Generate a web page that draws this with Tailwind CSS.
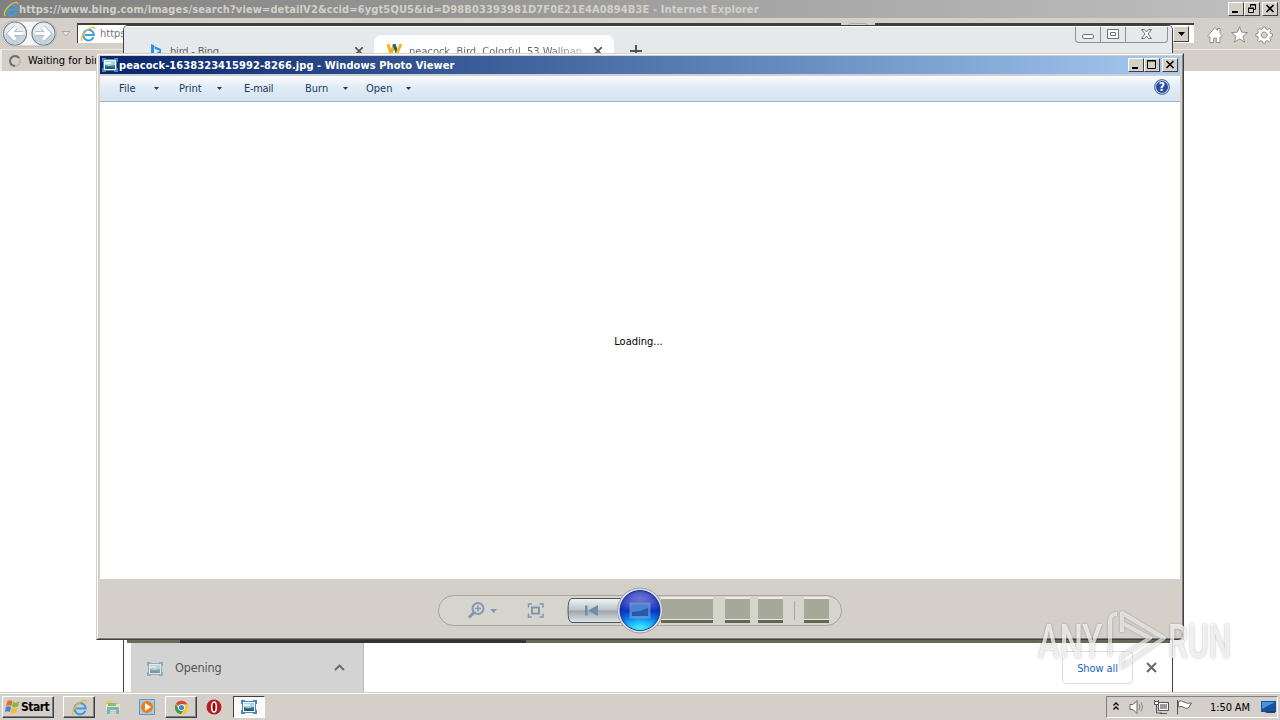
<!DOCTYPE html>
<html lang="en">
<head>
    <meta charset="UTF-8">
    <meta name="viewport" content="width=device-width, initial-scale=1.0">
    <title>Windows Photo Viewer</title>
    <script src="https://cdn.jsdelivr.net/npm/@tailwindcss/browser@4"></script>
</head>
<body class="bg-white">
    <svg class="hidden">
        <defs>
            <symbol id="ie" viewBox="0 0 16 16">
                <path d="M13.500 11.200A5.300 5.300 0 1 1 13.900 8.900H5" fill="none" stroke="#3a9fe0" stroke-width="2"/>
                <path d="M2.600 14.600C-.5 14.500 2.200 8 7 4.200 11 1 15.200.2 14.600 3.400" fill="none" stroke="#f0bd2a" stroke-width="1.300"/>
            </symbol>
            <symbol id="photo" viewBox="0 0 16 16">
                <path d="M0 1h4v1h8V1h4v4h-1v6h1v4h-4v-1H4v1H0v-4h1V5H0z" fill="#4d87b8"/>
                <path d="M2 3h12v10H2z" fill="#f4fafd"/>
                <path d="M3 4h10v8H3z" fill="#a9d5e8"/>
                <path d="M3 5h6v2H3z" fill="#e3f3f9"/>
                <path d="M3 8l4 1 6-1v4H3z" fill="#37788e"/>
                <path d="M3 10.500l5-.5 5 1v1H3z" fill="#245a62"/>
            </symbol>
        </defs>
    </svg>
    <div class="relative h-[720px] w-[1280px] overflow-hidden bg-white text-[11px] leading-none whitespace-nowrap text-black [font-family:'DejaVu_Sans_Condensed','DejaVu_Sans',sans-serif]">

        <!-- Internet Explorer -->
        <div class="flex h-[692px] flex-col">
            <header class="flex h-[18px] items-center bg-linear-to-r from-[#808080] to-[#c0c0c0] pl-[3px]">
                <svg class="size-4"><use href="#ie"/></svg>
                <h1 class="flex-1 text-[11px] font-bold tracking-[0.12px] text-[#d4d0c8]">https://www.bing.com/images/search?view=detailV2&amp;ccid=6ygt5QU5&amp;id=D98B03393981D7F0E21E4A0894B3E - Internet Explorer</h1>
                <div class="flex pr-[2px]">
                    <button class="flex h-[14px] w-4 border border-t-white border-r-[#404040] border-b-[#404040] border-l-white bg-[#d4d0c8]"><svg class="h-3 w-[14px]" viewBox="0 0 14 12"><path d="M3 8h6v2H3z"/></svg></button>
                    <button class="flex h-[14px] w-4 border border-t-white border-r-[#404040] border-b-[#404040] border-l-white bg-[#d4d0c8]"><svg class="h-3 w-[14px]" viewBox="0 0 14 12"><path d="M5.500 4V1.500h5v5H8M5 2h6M3.500 5.500h5v4h-5zM3 5h6" fill="none" stroke="#000"/></svg></button>
                    <button class="ml-[2px] flex h-[14px] w-4 border border-t-white border-r-[#404040] border-b-[#404040] border-l-white bg-[#d4d0c8]"><svg class="h-3 w-[14px]" viewBox="0 0 14 12"><path d="M3.500 2l7 7M10.500 2l-7 7" stroke="#000" stroke-width="1.600"/></svg></button>
                </div>
            </header>
            <div class="flex h-[31px] bg-[#d4cfc8]">
                <svg class="h-[31px] w-[77px]" viewBox="0 0 77 31">
                    <path d="M14 3h30a12 12 0 0 1 0 25H14a12 12 0 0 1 0-25" fill="#f6f6f5" stroke="#b5b5b5"/>
                    <g fill="#e6ecef" stroke="#727b82" stroke-width="1.200"><circle cx="15" cy="15.500" r="11.500"/><circle cx="43.500" cy="15.500" r="11.500"/></g>
                    <path d="M4.500 16q10.500 4 21 0a10.500 10.500 0 0 1-21 0M33 16q10.500 4 21 0a10.500 10.500 0 0 1-21 0" fill="#c3d3de"/>
                    <path d="M23 15.500H9.500M15.500 9.500l-6 6 6 6M35.500 15.500H49M43 9.500l6 6-6 6" fill="none" stroke="#a0abb3" stroke-width="5"/>
                    <path d="M23 15.500H9.500M15.500 9.500l-6 6 6 6M35.500 15.500H49M43 9.500l6 6-6 6" fill="none" stroke="#fff" stroke-width="3.600"/>
                    <path d="M62 13.500h8l-4 4.500z" fill="#e8e5df" stroke="#aaa7a2"/>
                </svg>
                <div class="mt-[5px] flex h-5 w-[764px] border-t-2 border-l border-[#404040] bg-white pl-[2px]">
                    <svg class="mt-px size-4"><use href="#ie"/></svg>
                    <span class="ml-1 pt-[3px] text-[#777]">https</span>
                </div>
                <div class="mx-[6px] mt-[5px] h-5 w-[22px] rounded-t border border-[#aaa]"></div>
                <div class="mt-[5px] flex h-5 w-[319px] border-t-2 border-l border-[#404040] bg-white">
                    <span class="mt-[1px] mr-[5px] ml-auto flex h-4 w-4 items-center justify-center border border-t-white border-r-[#404040] border-b-[#404040] border-l-white bg-[#d4d0c8]"><svg class="h-1 w-[7px]" viewBox="0 0 7 4"><path d="M0 0h7L3.500 4z"/></svg></span>
                </div>
                <svg class="mt-[7px] ml-[11px] h-5 w-[70px]" viewBox="0 0 70 20">
                    <g fill="#fff" stroke="#918e89" stroke-width="1">
                        <path d="M3 10.500l7-8 2.500 2.800V3.500H15v4.800l2.500 2.700-1.300 1H15v5.500h-3.700v-4.500H8.700v4.500H5V12H3.800l-1.300-1z"/>
                        <path d="M34.500 1.800l2.200 5.400 5.800.4-4.500 3.700 1.500 5.800-5-3.200-5 3.200 1.500-5.800-4.500-3.700 5.800-.4z"/>
                        <path fill-rule="evenodd" d="M58 2h2.500l.5 2 1.500.7 2-1.200 1.600 1.800-1.200 1.700.6 1.600 2 .4v2.300l-2 .5-.6 1.600 1.200 1.800-1.700 1.600-1.900-1.200-1.600.6-.5 2H58l-.6-2-1.500-.6-1.800 1.200-1.700-1.700 1.200-1.700-.7-1.700-2-.4V8.900l2-.4.7-1.600-1.200-1.700L54 3.500l1.900 1.200 1.500-.7zM59.200 7a3 3 0 1 0 .01 0"/>
                    </g>
                </svg>
            </div>
            <div class="flex h-[22px] items-center border-t border-l-2 border-[#eeeae4] bg-[#d4cfc8]">
                <svg class="mr-[6px] ml-1.5 h-[14px] w-[14px]" viewBox="0 0 14 14"><circle cx="7" cy="7" r="5" fill="none" stroke="#bbb8b4" stroke-width="2"/><path d="M7 12a5 5 0 1 1 4-8" fill="none" stroke="#6e6e6e" stroke-width="2"/></svg>
                <span>Waiting for bing.com</span>
            </div>
        </div>

        <!-- Chrome -->
        <div class="absolute top-[25px] left-[123px] flex h-[667px] w-[1050px] flex-col overflow-hidden rounded-t-[5px] border-x border-t border-[#404040] bg-white">
            <div class="flex h-[40px] border-t border-white bg-[#e6e9ec]">
                <div class="flex w-[250px] pt-[17px] pl-[26px] text-[#606469]">
                    <svg class="h-4 w-3" viewBox="0 0 12 16"><path d="M1 0l3 1v9l6-3-5-2-1-3 7 3v5l-7 5-3-2z" fill="#2595e5"/></svg>
                    <span class="ml-2 pt-0.5 tracking-[-0.2px]">bird - Bing</span>
                    <svg class="mt-[3px] mr-[11px] ml-auto size-2" viewBox="0 0 8 8"><path d="M0 0l8 8M8 0L0 8" stroke="#555" stroke-width="1.700"/></svg>
                </div>
                <div class="mt-2 flex w-[240px] rounded-t-lg bg-white pt-[9px] pl-[13px] text-[#606469]">
                    <svg class="h-3 w-4" viewBox="0 0 16 12"><path d="M1 0l3 10 3-9" fill="none" stroke="#eeb522" stroke-width="3"/><path d="M7 0l3 9" stroke="#31577b" stroke-width="3"/><path d="M10 9l4-9" stroke="#eeb522" stroke-width="3"/></svg>
                    <span class="ml-[6px] w-[174px] overflow-hidden bg-linear-to-r from-[#606469] from-80% to-[#c0c0c0] bg-clip-text pt-0.5 text-transparent">peacock, Bird, Colorful, 53 Wallpap</span>
                    <svg class="mt-[3px] ml-[11px] size-2" viewBox="0 0 8 8"><path d="M0 0l8 8M8 0L0 8" stroke="#555" stroke-width="1.700"/></svg>
                </div>
                <svg class="mt-[18px] ml-[16px] size-3" viewBox="0 0 12 12"><path d="M0 6h12M6 0v12" stroke="#505357" stroke-width="2"/></svg>
                <div class="mr-[4px] ml-auto flex h-[16px] w-[93px] rounded-b-[4px] border border-t-0 border-[#8d9298] text-[#606469]">
                    <span class="w-[25px] border-r border-[#8d9298]"><svg class="h-4 w-6" viewBox="0 0 24 16"><rect x="6.500" y="7.500" width="11" height="4" rx="1.500" fill="#fff" stroke="#6d7278"/></svg></span>
                    <span class="w-[25px] border-r border-[#8d9298]"><svg class="h-4 w-6" viewBox="0 0 24 16"><path d="M6.500 2.500h11v9h-11zM9.500 5.500h5v3h-5z" fill="#fff" stroke="#6d7278"/></svg></span>
                    <svg class="h-4 w-[40px]" viewBox="0 0 40 16"><path d="M15.500 2.500h3l2 2.500 2-2.500h3L22 7l3.500 4.500h-3l-2-2.500-2 2.500h-3L19 7z" fill="#fff" stroke="#6d7278"/></svg>
                </div>
            </div>
            <div class="mt-auto mr-[2px] ml-[3px] h-[13px] bg-linear-to-r from-[#6b6b58] from-[53px] via-[#343434] via-[53px] to-[#343434] to-[400px]"><div class="ml-[399px] h-full bg-[#69695a]"></div></div>
            <div class="ml-[7px] flex h-[49px] shrink-0">
                <div class="flex w-[233px] items-center border-r border-[#bbb] bg-[#d3d3d3] text-[12.500px] text-[#555]">
                    <svg class="mt-[2px] ml-4 size-4 opacity-50"><use href="#photo"/></svg>
                    <span class="mt-px ml-[12px] tracking-[-0.150px]">Opening</span>
                    <svg class="mr-[18px] ml-auto h-[7px] w-[11px]" viewBox="0 0 11 7"><path d="M1 6l4.500-4.500L10 6" fill="none" stroke="#666" stroke-width="1.800"/></svg>
                </div>
                <div class="mt-[8px] ml-auto flex h-[33px] w-[71px] items-center justify-center rounded border border-[#dadce0] pt-px tracking-[-0.100px] text-[#1967c0]">Show all</div>
                <svg class="mt-[19px] mr-[15px] ml-[13px] size-[11px]" viewBox="0 0 11 11"><path d="M1 1l9 9M10 1l-9 9" stroke="#666" stroke-width="2"/></svg>
            </div>
        </div>

        <!-- Photo Viewer -->
        <div class="absolute top-[53px] left-[96px] flex h-[587px] w-[1088px] flex-col border border-t-[#d4cfc8] border-r-[#404040] border-b-[#404040] border-l-[#d4cfc8] bg-[#d4cfc8]">
            <div class="flex flex-1 flex-col border border-t-white border-r-[#808080] border-b-[#808080] border-l-white px-[2px] pt-px">
                <header class="flex h-[18px] shrink-0 items-center bg-linear-to-r from-[#0a246a] to-[#a6caf0] pl-[2px] text-white">
                    <svg class="size-4"><use href="#photo"/></svg>
                    <h2 class="ml-px flex-1 text-[11px] font-bold tracking-[0.08px]">peacock-1638323415992-8266.jpg - Windows Photo Viewer</h2>
                    <div class="flex pr-[2px]">
                        <button class="flex h-[14px] w-4 border border-t-white border-r-[#404040] border-b-[#404040] border-l-white bg-[#d4d0c8]"><svg class="h-3 w-[14px]" viewBox="0 0 14 12"><path d="M3 8h6v2H3z"/></svg></button>
                        <button class="flex h-[14px] w-4 border border-t-white border-r-[#404040] border-b-[#404040] border-l-white bg-[#d4d0c8]"><svg class="h-3 w-[14px]" viewBox="0 0 14 12"><path d="M2.500 1.500h8v8h-8zM2 2h9" fill="none" stroke="#000"/></svg></button>
                        <button class="ml-[2px] flex h-[14px] w-4 border border-t-white border-r-[#404040] border-b-[#404040] border-l-white bg-[#d4d0c8]"><svg class="h-3 w-[14px]" viewBox="0 0 14 12"><path d="M3.500 2l7 7M10.500 2l-7 7" stroke="#000" stroke-width="1.600"/></svg></button>
                    </div>
                </header>
                <nav class="mt-px flex h-[27px] shrink-0 items-center border-t border-b border-t-[#c1d0e2] border-b-[#a0afc3] bg-linear-to-b from-[#fafcfe] via-[#e1ecf6] via-45% to-[#d5e4f1] pr-[10px] pl-[19px] text-[#1e395b]">
                    <span class="w-[35px]">File</span>
                    <svg class="h-[3px] w-[5px]" viewBox="0 0 5 3"><path d="M0 0h5L2.500 3z" fill="#1e395b"/></svg>
                    <span class="ml-5 w-[38px]">Print</span>
                    <svg class="h-[3px] w-[5px]" viewBox="0 0 5 3"><path d="M0 0h5L2.500 3z" fill="#1e395b"/></svg>
                    <span class="ml-[22px] w-[61px] tracking-[-0.300px]">E-mail</span>
                    <span class="w-[38px]">Burn</span>
                    <svg class="h-[3px] w-[5px]" viewBox="0 0 5 3"><path d="M0 0h5L2.500 3z" fill="#1e395b"/></svg>
                    <span class="ml-[18px] w-10">Open</span>
                    <svg class="h-[3px] w-[5px]" viewBox="0 0 5 3"><path d="M0 0h5L2.500 3z" fill="#1e395b"/></svg>
                    <span class="mb-[3px] ml-auto flex size-4 items-center justify-center rounded-full border border-[#657eaa] bg-[#264aa5] text-[12px] font-bold text-white ring-1 ring-[#c9d7e7] ring-inset">?</span>
                </nav>
                <main class="flex flex-1 items-center justify-center bg-white pt-[2px] pr-[3px]">Loading...</main>
                <footer class="flex h-[59px] shrink-0 justify-center">
                    <svg class="mt-[6px] h-[50px] w-[408px]" viewBox="0 0 408 50">
                        <defs>
                            <linearGradient id="ball" x2="0" y2="1"><stop stop-color="#a5aae4"/><stop offset=".3" stop-color="#5562cf"/><stop offset=".5" stop-color="#0a35c0"/><stop offset=".75" stop-color="#078bee"/><stop offset="1" stop-color="#45e6fa"/></linearGradient>
                            <radialGradient id="rim" cy=".6" r=".6"><stop offset=".6" stop-color="#0625ac" stop-opacity="0"/><stop offset="1" stop-color="#0a1fa0" stop-opacity=".7"/></radialGradient>
                            <radialGradient id="glow" cx=".5" cy="1" r=".45"><stop stop-color="#4ff0ff"/><stop offset="1" stop-color="#19b4ff" stop-opacity="0"/></radialGradient>
                            <linearGradient id="prev" x2="0" y2="1"><stop stop-color="#f0f3f4"/><stop offset=".48" stop-color="#bcc5c9"/><stop offset=".52" stop-color="#9ca7ad"/><stop offset="1" stop-color="#e1e6e7"/></linearGradient>
                        </defs>
                        <rect x="2.500" y="10.500" width="403" height="30" rx="15" fill="#d5d4cd" stroke="#a4a5a5"/>
                        <g fill="none" stroke="#8298b2" stroke-width="2"><circle cx="42" cy="23.500" r="5.500"/><path d="M38 27.500l-5 5" stroke-width="3"/><path d="M39 23.500h6M42 20.500v6" stroke-width="1.500"/><path d="M96 22.500h7v6h-7z"/><path d="M92.500 22.500v-3.500h3.500M103.500 19h3.500v3.500M107 28.500v3.500h-3.500M96 32h-3.500v-3.500" stroke-width="1.500"/></g>
                        <path d="M54 24h7l-3.500 4z" fill="#8298b2"/>
                        <path d="M190 13.500h-54q-4 0-4 12t4 12h54" fill="url(#prev)" stroke="#50575b"/>
                        <path d="M149 20.500h2.500v10H149zM152 25.500l10-5.500v11z" fill="#748da7"/>
                        <g fill="#a6a99a"><path d="M225 14h52v20h-52zM289 14h25v20h-25zM322 14h25v20h-25zM368 14h25v20h-25z"/></g>
                        <g fill="#626651"><path d="M225 35h52v3h-52zM289 35h25v3h-25zM322 35h25v3h-25zM368 35h25v3h-25z"/></g>
                        <g fill="#eceae3"><path d="M225 12h52v2h-52zM289 12h25v2h-25zM322 12h25v2h-25zM368 12h25v2h-25zM225 34h52v1h-52zM289 34h25v1h-25zM322 34h25v1h-25zM368 34h25v1h-25z"/></g>
                        <path d="M358.500 16v19" stroke="#a5a5a1"/>
                        <circle cx="204" cy="25.500" r="22.500" fill="#e1e1e2" stroke="#9a9ca7"/>
                        <circle cx="204" cy="25.500" r="20" fill="url(#ball)" stroke="#17388f"/>
                        <circle cx="204" cy="25.500" r="20" fill="url(#rim)"/>
                        <circle cx="204" cy="25.500" r="19.500" fill="url(#glow)"/>
                        <path d="M193.500 17.500h21v16h-21z" fill="#7fa0d4" opacity=".65"/>
                        <path d="M196 20h16v11h-16z" fill="#4a83cf"/><path d="M196 27l8-1 8-3v8h-16z" fill="#275aa8"/>
                    </svg>
                </footer>
            </div>
        </div>

        <!-- Taskbar -->
        <footer class="relative flex h-7 items-center border-t border-[#d4cfc8] bg-[#d4cfc8] pt-px pl-[2px] shadow-[inset_0_1px_#fff]">
            <button class="flex h-[22px] w-[52px] items-center border border-t-white border-r-[#404040] border-b-[#404040] border-l-white pl-[2px] text-[12px] font-bold shadow-[inset_-1px_-1px_#808080]">
                <svg class="h-4 w-[15px]" viewBox="0 0 15 16"><path d="M2.500 2q3-1.500 5 .5L6.300 7.300Q4 5.500 1 7z" fill="#e66d2e"/><path d="M8 3q3 1.500 6.500-.5L13 7.500Q9.500 9 7 7.500z" fill="#86b643"/><path d="M.8 8q3-1.500 5.200.3L4.800 13Q2.500 11.500 0 13z" fill="#4685cd"/><path d="M6.800 8.500q2.500 1.500 6 0l-1.300 5q-3 1.500-6-.3z" fill="#f1bf37"/></svg>
                <span class="ml-px tracking-[-0.500px]">Start</span>
            </button>
            <span class="ml-[9px] flex h-[22px] w-8 items-center justify-center border border-t-white border-r-[#404040] border-b-[#404040] border-l-white shadow-[inset_-1px_-1px_#808080]"><svg class="size-[17px]"><use href="#ie"/></svg></span>
            <svg class="ml-[10px] size-4" viewBox="0 0 16 16"><path d="M1 2h5l1 2h7v9H1z" fill="#e4c565"/><path d="M1 5h14v7H1z" fill="#f6e59d"/><path d="M3 4h8v3H3z" fill="#91b873"/><path d="M2 15V9q0-1 1-1h10q1 0 1 1v6h-3v-4H5v4z" fill="#68b6df"/></svg>
            <svg class="ml-[18px] size-4" viewBox="0 0 16 16"><path d="M.500.500h15v15H.500z" fill="#a9cbe8" stroke="#5998c9"/><circle cx="8" cy="8" r="6" fill="#ed7c16"/><path d="M6 4l6 4-6 4z" fill="#fff"/></svg>
            <span class="ml-[10px] flex h-[22px] w-8 items-center justify-center border border-t-white border-r-[#404040] border-b-[#404040] border-l-white shadow-[inset_-1px_-1px_#808080]">
                <svg class="size-[15px]" viewBox="0 0 16 16"><circle cx="8" cy="8" r="7" fill="#f3ca2e"/><path d="M8 8L2 4.300A7 7 0 0 1 14.200 4.500H8z" fill="#db4437"/><path d="M2 4.300A7 7 0 0 0 7.500 15l3-5H5z" fill="#3d9a50"/><circle cx="8" cy="8" r="3.600" fill="#fff"/><circle cx="8" cy="8" r="2.800" fill="#4285e8"/></svg>
            </span>
            <svg class="ml-[9px] size-4" viewBox="0 0 16 16"><circle cx="8" cy="8" r="7.500" fill="#bd1820"/><ellipse cx="8" cy="8" rx="2.300" ry="5" fill="#8b080d" stroke="#fff" stroke-width="1.600"/></svg>
            <span class="ml-[11px] flex h-[22px] w-8 items-center justify-center border border-t-[#404040] border-r-white border-b-white border-l-[#404040] bg-[#fbfaf9]"><svg class="size-4"><use href="#photo"/></svg></span>
            <div class="mr-[2px] ml-auto flex h-[22px] w-[172px] items-center border border-t-[#808080] border-r-white border-b-white border-l-[#808080]">
                <svg class="mb-[2px] ml-[6px] h-2 w-[6px]" viewBox="0 0 6 8"><path d="M.500 3.500L3 1l2.500 2.500M.500 7.500L3 5l2.500 2.500" fill="none" stroke="#000" stroke-width="1.300"/></svg>
                <svg class="ml-[10px] size-4" viewBox="0 0 16 16"><path d="M1 5.500h3l4-4v13l-4-4H1z" fill="#fff" stroke="#666"/><path d="M10 5q2 3 0 6M12 3.500q3 4.500 0 9" fill="none" stroke="#888"/></svg>
                <svg class="ml-[8px] size-4" viewBox="0 0 16 16"><path d="M5.500 3.500h10v8h-10z" fill="#999" stroke="#555"/><path d="M6.500 4.500h8v6h-8z" fill="none" stroke="#fff"/><path d="M1.500 1v4h4V1M3.500 5v9H9M7 14.500h7" fill="none" stroke="#555"/><path d="M1.500 2.500h4v3h-4z" fill="#fff" stroke="#555"/></svg>
                <svg class="ml-[7px] size-4" viewBox="0 0 16 16"><path d="M1.500 1v14.500" stroke="#555"/><path d="M2.500 2.500Q6 1 8 3q3 2 7.500 1l-3 5Q9 10 7 8 5 7 2.500 8z" fill="#fff" stroke="#666"/></svg>
                <time class="ml-[18px] tracking-[-0.100px]">1:50 AM</time>
                <svg class="mr-px ml-auto h-4 w-[15px]" viewBox="0 0 15 16"><path d="M0 2h15v11H0z" fill="#16529f"/><path d="M1 3h13L1 10z" fill="#4a94dc"/><path d="M1 12h13v2H6z" fill="#234164"/></svg>
            </div>
        </footer>

        <!-- Watermark -->
        <div class="absolute top-[606px] left-[1038px] flex h-[68px] w-[196px] font-['Roboto',sans-serif] text-[48px] leading-[36px] font-medium text-white/75 [text-shadow:0_0_3px_rgb(0_0_0/0.3)]">
            <span class="mt-[18px] h-9 w-[66px]"><span class="inline-block origin-left scale-x-[0.68]">ANY</span></span>
            <svg class="h-[68px] w-[64px] shrink-0 drop-shadow-[0_0_1px_rgb(0_0_0/0.4)]" viewBox="0 0 64 68"><path d="M13 8q-7 0-7 7v35M18 26V7l42 25-42 29V50l28-18L18 17" fill="none" stroke="#fff" stroke-width="4" stroke-linejoin="round" stroke-opacity=".65"/></svg>
            <span class="mt-[18px] h-9 w-[66px]"><span class="inline-block origin-left scale-x-[0.66]">RUN</span></span>
        </div>
    </div>
</body>
</html>
